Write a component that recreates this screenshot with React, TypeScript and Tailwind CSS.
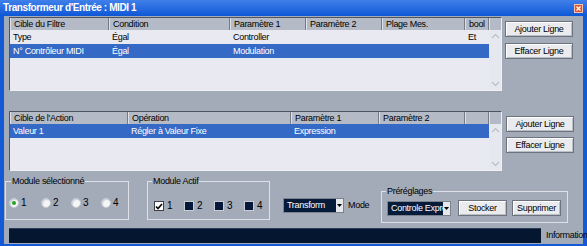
import React from "react";

const FONT = "font-['Liberation_Sans',Arial,sans-serif]";

type Col = { label: string; w: string };

const topCols: Col[] = [
  { label: "Cible du Filtre", w: "w-[99px]" },
  { label: "Condition", w: "w-[121px]" },
  { label: "Paramètre 1", w: "w-[76px]" },
  { label: "Paramètre 2", w: "w-[76px]" },
  { label: "Plage Mes.", w: "w-[83px]" },
  { label: "bool", w: "w-[24px]" },
];

const topRows = [
  { cells: ["Type", "Égal", "Controller", "", "", "Et"], sel: false },
  { cells: ["N° Contrôleur MIDI", "Égal", "Modulation", "", "", ""], sel: true },
];

const botCols: Col[] = [
  { label: "Cible de l'Action", w: "w-[118px]" },
  { label: "Opération", w: "w-[163px]" },
  { label: "Paramètre 1", w: "w-[88px]" },
  { label: "Paramètre 2", w: "w-[86px]" },
  { label: "", w: "w-[24px]" },
];

const botRows = [{ cells: ["Valeur 1", "Régler à Valeur Fixe", "Expression", "", ""], sel: true }];

function Chevron({ up }: { up?: boolean }) {
  return (
    <svg width="9" height="6" viewBox="0 0 9 6" className="block">
      <path
        d={up ? "M1 5 L4.5 1.5 L8 5" : "M1 1 L4.5 4.5 L8 1"}
        fill="none"
        stroke="#b9bec9"
        strokeWidth="1.2"
      />
    </svg>
  );
}

function Table({
  cols,
  rows,
  h,
}: {
  cols: Col[];
  rows: { cells: string[]; sel: boolean }[];
  h: string;
}) {
  return (
    <div
      className={`flex flex-col w-[493px] ${h} border-t border-l border-t-[#4f5560] border-l-[#4f5560] border-r border-b border-r-[#eef0f4] border-b-[#eef0f4] bg-[#e8e9f1]`}
    >
      <div className="flex h-[12px] shrink-0 bg-[#b4bbc6]">
        {cols.map((c, i) => (
          <div
            key={i}
            className={`${c.w} h-[12px] shrink-0 border-r border-r-[#767c87] border-l border-l-[#dde0e6] pl-[3px] leading-[12px] text-black whitespace-nowrap overflow-hidden`}
          >
            {c.label}
          </div>
        ))}
        <div className="flex-1 h-[12px] border-l border-l-[#dde0e6]" />
      </div>
      <div className="flex flex-1">
        <div className="w-[479px] flex flex-col">
          {rows.map((r, i) => (
            <div
              key={i}
              className={`flex h-[14px] ${r.sel ? "bg-[#3469c6] text-white" : "text-black"}`}
            >
              {r.cells.map((t, j) => (
                <div
                  key={j}
                  className={`${cols[j].w} shrink-0 pl-[3px] leading-[14px] whitespace-nowrap overflow-hidden`}
                >
                  {t}
                </div>
              ))}
            </div>
          ))}
        </div>
        <div className="flex-1 flex flex-col items-center justify-between py-[3px] bg-[#e6e8ef]">
          <Chevron up />
          <Chevron />
        </div>
      </div>
    </div>
  );
}

function Btn({ children, w }: { children: React.ReactNode; w: string }) {
  return (
    <div
      className={`${w} h-[16px] flex items-center justify-center bg-[#e9ebef] border border-[#6d737d] shadow-[inset_1px_1px_0_#ffffff,inset_-1px_-1px_0_#b9bec7] text-black leading-none`}
    >
      {children}
    </div>
  );
}

function Radio({ sel }: { sel?: boolean }) {
  return (
    <span className="w-[10px] h-[10px] shrink-0 rounded-full bg-[#f6f6f6] border border-[#c3c8d1] flex items-center justify-center shadow-[inset_1px_1px_1px_#c9ced6]">
      {sel && <span className="w-[4px] h-[4px] rounded-full bg-[#21a521]" />}
    </span>
  );
}

function Check({ on }: { on?: boolean }) {
  return on ? (
    <span className="w-[10px] h-[10px] shrink-0 bg-white border border-[#3a3f48] flex items-center justify-center">
      <svg width="8" height="7" viewBox="0 0 8 7">
        <path d="M1 3.5 L3 5.5 L7 1" fill="none" stroke="#000" strokeWidth="1.6" />
      </svg>
    </span>
  ) : (
    <span className="w-[10px] h-[10px] shrink-0 bg-[#06183a] border border-[#c9cdd4]" />
  );
}

function Select({ value, w }: { value: string; w: string }) {
  return (
    <div className={`${w} h-[15px] shrink-0 flex bg-[#061a3a] border border-[#7d838e]`}>
      <div className="flex-1 min-w-0 pl-[3px] text-white leading-[13px] whitespace-nowrap overflow-hidden">
        {value}
      </div>
      <div className="w-[7px] h-[13px] shrink-0 bg-[#e6e8ec] flex items-center justify-center">
        <svg width="5" height="3" viewBox="0 0 5 3">
          <path d="M0 0 L5 0 L2.5 3 Z" fill="#000" />
        </svg>
      </div>
    </div>
  );
}

export default function App() {
  return (
    <div
      className={`w-[587px] h-[246px] flex flex-col bg-[#1459d6] ${FONT} text-[9px] tracking-[-0.3px] overflow-hidden`}
    >
      {/* title bar */}
      <div className="h-[16px] shrink-0 flex items-center justify-between bg-gradient-to-b from-[#3f80ea] to-[#0b57d6] pl-[3px] pr-[4px]">
        <span className="text-white font-bold text-[10px] tracking-[-0.4px] leading-none">
          Transformeur d'Entrée : MIDI 1
        </span>
        <span className="w-[9px] h-[9px] bg-[#e2542c] border border-[#f5c3b0] flex items-center justify-center">
          <svg width="5" height="5" viewBox="0 0 5 5">
            <path d="M0.5 0.5 L4.5 4.5 M4.5 0.5 L0.5 4.5" stroke="#fff" strokeWidth="1.3" />
          </svg>
        </span>
      </div>

      {/* body */}
      <div className="mx-[4px] h-[228px] bg-[#a3abb8] flex flex-col">
        {/* filter section */}
        <div className="flex items-start pl-[5px] pt-[1px]">
          <Table cols={topCols} rows={topRows} h="h-[74px]" />
          <div className="ml-[3px] mt-[4px] flex flex-col gap-[6px]">
            <Btn w="w-[68px]">Ajouter Ligne</Btn>
            <Btn w="w-[68px]">Effacer Ligne</Btn>
          </div>
        </div>

        {/* action section */}
        <div className="flex items-start pl-[5px] mt-[20px]">
          <Table cols={botCols} rows={botRows} h="h-[60px]" />
          <div className="ml-[4px] mt-[5px] flex flex-col gap-[5px]">
            <Btn w="w-[68px]">Ajouter Ligne</Btn>
            <Btn w="w-[68px]">Effacer Ligne</Btn>
          </div>
        </div>

        {/* bottom controls */}
        <div className="flex items-start mt-[4px] h-[48px] text-black">
          <fieldset className="ml-[1px] w-[124px] min-w-0 h-[45px] shrink-0 border border-[#dde1e7] pl-[3px]">
            <legend className="ml-[2px] px-[1px] leading-[12px]">Module sélectionné</legend>
            <div className="flex items-center mt-[11px]">
              {["1", "2", "3", "4"].map((n, i) => (
                <div
                  key={n}
                  className={`flex items-center gap-[2px] shrink-0 ${i === 0 ? "w-[32px]" : i === 3 ? "" : "w-[30px]"}`}
                >
                  <Radio sel={i === 0} />
                  <span className="leading-none text-[10px]">{n}</span>
                </div>
              ))}
            </div>
          </fieldset>

          <fieldset className="ml-[18px] w-[123px] min-w-0 h-[45px] shrink-0 border border-[#dde1e7] pl-[6px]">
            <legend className="-ml-[2px] px-[1px] leading-[12px]">Module Actif</legend>
            <div className="flex items-center mt-[14px]">
              {["1", "2", "3", "4"].map((n, i) => (
                <div key={n} className={`flex items-center gap-[3px] shrink-0 ${i === 3 ? "" : "w-[30px]"}`}>
                  <Check on={i === 0} />
                  <span className="leading-none text-[10px]">{n}</span>
                </div>
              ))}
            </div>
          </fieldset>

          <div className="ml-[13px] mt-[23px] w-[98px] shrink-0 flex items-center gap-[4px]">
            <Select value="Transform" w="w-[61px]" />
            <span className="leading-none">Mode</span>
          </div>

          <fieldset className="mt-[10px] w-[187px] min-w-0 h-[38px] shrink-0 border border-[#dde1e7] pl-[5px]">
            <legend className="-ml-[1px] px-[1px] leading-[12px]">Préréglages</legend>
            <div className="flex items-center mt-[3px]">
              <Select value="Controle Expression" w="w-[64px]" />
              <div className="ml-[7px]">
                <Btn w="w-[49px]">Stocker</Btn>
              </div>
              <div className="ml-[5px]">
                <Btn w="w-[49px]">Supprimer</Btn>
              </div>
            </div>
          </fieldset>
        </div>

        {/* info bar */}
        <div className="flex items-center mt-[5px] pl-[5px] h-[15px]">
          <div className="w-[532px] h-[15px] shrink-0 bg-[#041630] border-t border-[#2b3a55]" />
          <span className="ml-[5px] text-black leading-none whitespace-nowrap">Information</span>
        </div>
      </div>
    </div>
  );
}
